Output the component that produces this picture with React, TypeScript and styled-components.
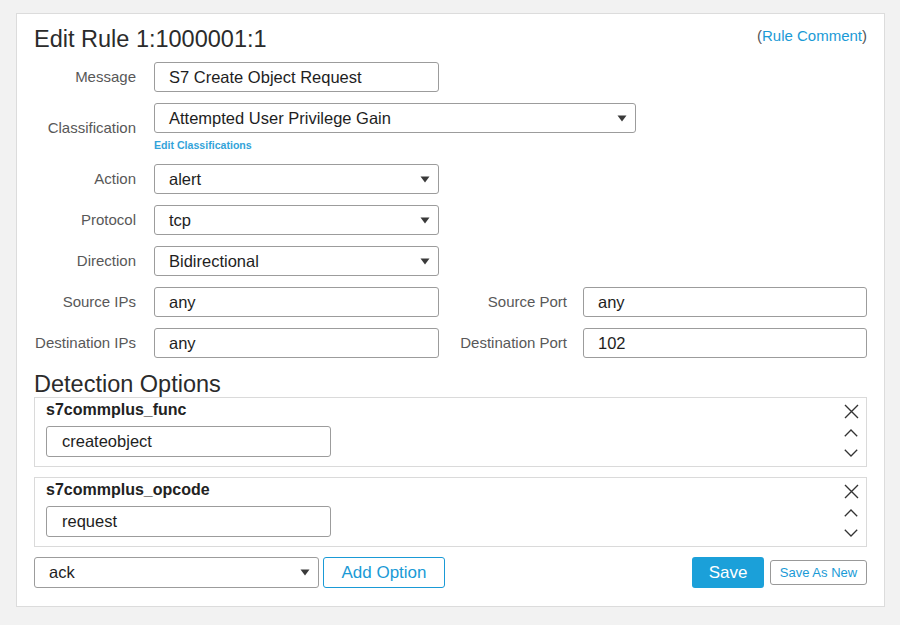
import React from 'react';
import styled, { createGlobalStyle } from 'styled-components';

const GlobalStyle = createGlobalStyle`
  body {
    margin: 0;
    background: #f2f2f2;
    font-family: 'Liberation Sans', Arial, sans-serif;
  }
`;

const blue = '#1a9ad6';

const Panel = styled.div`
  margin: 13px 15px 0 16px;
  padding: 11px 17px 18px 17px;
  background: #fff;
  border: 1px solid #dcdcdc;
`;

const Header = styled.div`
  display: flex;
  justify-content: space-between;
  align-items: flex-start;
`;

const Title = styled.h1`
  margin: 0;
  font-size: 23.5px;
  line-height: 28px;
  font-weight: 400;
  color: #2b2b2b;
`;

const CommentLink = styled.div`
  margin-top: 2px;
  font-size: 15px;
  line-height: 18px;
  color: #555;
  span {
    color: ${blue};
  }
`;

const Form = styled.div`
  margin-top: 9px;
  display: flex;
  flex-direction: column;
  gap: 11px;
`;

const Row = styled.div<{ $center?: boolean }>`
  display: flex;
  align-items: ${p => (p.$center ? 'center' : 'flex-start')};
`;

const Label = styled.div<{ $width?: number; $gapLeft?: number; $gapRight?: number }>`
  width: ${p => p.$width ?? 102}px;
  margin-left: ${p => p.$gapLeft ?? 0}px;
  margin-right: ${p => p.$gapRight ?? 18}px;
  text-align: right;
  line-height: 30px;
  font-size: 15px;
  color: #585858;
  white-space: nowrap;
`;

const Field = styled.div`
  display: flex;
  flex-direction: column;
`;

const TextBox = styled.div<{ $width?: number; $height?: number; $flex?: boolean }>`
  box-sizing: border-box;
  width: ${p => (p.$flex ? 'auto' : `${p.$width ?? 285}px`)};
  flex: ${p => (p.$flex ? 1 : 'none')};
  height: ${p => p.$height ?? 30}px;
  display: flex;
  align-items: center;
  justify-content: space-between;
  padding: 0 8px 0 14px;
  border: 1px solid #9c9c9c;
  border-radius: 3px;
  background: #fff;
  font-size: 16.5px;
  color: #1e1e1e;
`;

const SmallLink = styled.div`
  margin-top: 4px;
  font-size: 10.6px;
  line-height: 16px;
  font-weight: 700;
  color: ${blue};
  opacity: 0.9;
`;

const Heading = styled.h2`
  margin: 13px 0 0 0;
  font-size: 23.5px;
  line-height: 26px;
  font-weight: 400;
  color: #2b2b2b;
`;

const OptionBox = styled.div<{ $first?: boolean }>`
  display: flex;
  margin-top: ${p => (p.$first ? 0 : 10)}px;
  padding: 2px 8px 9px 11px;
  border: 1px solid #dadada;
  height: 57px;
`;

const OptionBody = styled.div`
  flex: 1;
  display: flex;
  flex-direction: column;
`;

const OptionName = styled.div`
  font-size: 16px;
  line-height: 19px;
  font-weight: 700;
  color: #222;
`;

const OptionInput = styled(TextBox)`
  margin-top: 7px;
  padding-left: 15px;
`;

const IconColumn = styled.div`
  width: 14px;
  display: flex;
  flex-direction: column;
  align-items: center;
  padding-top: 4px;
  svg {
    display: block;
  }
`;

const BottomRow = styled.div`
  display: flex;
  align-items: center;
  margin-top: 10px;
`;

const OutlineButton = styled.button`
  margin-left: 4px;
  width: 122px;
  height: 31px;
  border: 1px solid ${blue};
  border-radius: 3px;
  background: #fff;
  color: ${blue};
  font-family: inherit;
  font-size: 17px;
  padding: 0;
`;

const Spacer = styled.div`
  flex: 1;
`;

const PrimaryButton = styled.button`
  width: 72px;
  height: 31px;
  border: none;
  border-radius: 3px;
  background: #1ba0d9;
  color: #fff;
  font-family: inherit;
  font-size: 17px;
  padding: 0;
`;

const SecondaryButton = styled.button`
  margin-left: 6px;
  width: 97px;
  height: 25px;
  border: 1px solid #999;
  border-radius: 3px;
  background: #fff;
  color: ${blue};
  font-family: inherit;
  font-size: 13px;
  padding: 0;
`;

const Caret = () => (
  <svg width="10" height="7" viewBox="0 0 10 7">
    <path d="M0.5 0.5 L9.5 0.5 L5 6.5 Z" fill="#3a3a3a" />
  </svg>
);

const CloseIcon = () => (
  <svg width="15" height="15" viewBox="0 0 15 15">
    <path d="M1 1 L14 14 M14 1 L1 14" stroke="#333" strokeWidth="1.4" fill="none" />
  </svg>
);

const ChevronUp = ({ mt }: { mt: number }) => (
  <svg width="14" height="8" viewBox="0 0 14 8" style={{ marginTop: mt }}>
    <path d="M0.8 7.2 L7 1 L13.2 7.2" stroke="#333" strokeWidth="1.3" fill="none" />
  </svg>
);

const ChevronDown = ({ mt }: { mt: number }) => (
  <svg width="14" height="8" viewBox="0 0 14 8" style={{ marginTop: mt }}>
    <path d="M0.8 0.8 L7 7 L13.2 0.8" stroke="#333" strokeWidth="1.3" fill="none" />
  </svg>
);

const options = [
  { name: 's7commplus_func', value: 'createobject' },
  { name: 's7commplus_opcode', value: 'request' },
];

const App = () => {
  return (
    <>
      <GlobalStyle />
      <Panel>
        <Header>
          <Title>Edit Rule 1:1000001:1</Title>
          <CommentLink>
            (<span>Rule Comment</span>)
          </CommentLink>
        </Header>
        <Form>
          <Row>
            <Label>Message</Label>
            <TextBox>S7 Create Object Request</TextBox>
          </Row>
          <Row $center>
            <Label>Classification</Label>
            <Field>
              <TextBox $width={482}>
                Attempted User Privilege Gain
                <Caret />
              </TextBox>
              <SmallLink>Edit Classifications</SmallLink>
            </Field>
          </Row>
          <Row>
            <Label>Action</Label>
            <TextBox>
              alert
              <Caret />
            </TextBox>
          </Row>
          <Row>
            <Label>Protocol</Label>
            <TextBox>
              tcp
              <Caret />
            </TextBox>
          </Row>
          <Row>
            <Label>Direction</Label>
            <TextBox>
              Bidirectional
              <Caret />
            </TextBox>
          </Row>
          <Row>
            <Label>Source IPs</Label>
            <TextBox>any</TextBox>
            <Label $width={112} $gapLeft={16} $gapRight={16}>
              Source Port
            </Label>
            <TextBox $flex>any</TextBox>
          </Row>
          <Row>
            <Label>Destination IPs</Label>
            <TextBox>any</TextBox>
            <Label $width={112} $gapLeft={16} $gapRight={16}>
              Destination Port
            </Label>
            <TextBox $flex>102</TextBox>
          </Row>
        </Form>
        <Heading>Detection Options</Heading>
        {options.map((opt, idx) => (
          <OptionBox key={opt.name} $first={idx === 0}>
            <OptionBody>
              <OptionName>{opt.name}</OptionName>
              <OptionInput $height={31}>{opt.value}</OptionInput>
            </OptionBody>
            <IconColumn>
              <CloseIcon />
              <ChevronUp mt={10} />
              <ChevronDown mt={12} />
            </IconColumn>
          </OptionBox>
        ))}
        <BottomRow>
          <TextBox $height={31}>
            ack
            <Caret />
          </TextBox>
          <OutlineButton>Add Option</OutlineButton>
          <Spacer />
          <PrimaryButton>Save</PrimaryButton>
          <SecondaryButton>Save As New</SecondaryButton>
        </BottomRow>
      </Panel>
    </>
  );
};

export default App;
